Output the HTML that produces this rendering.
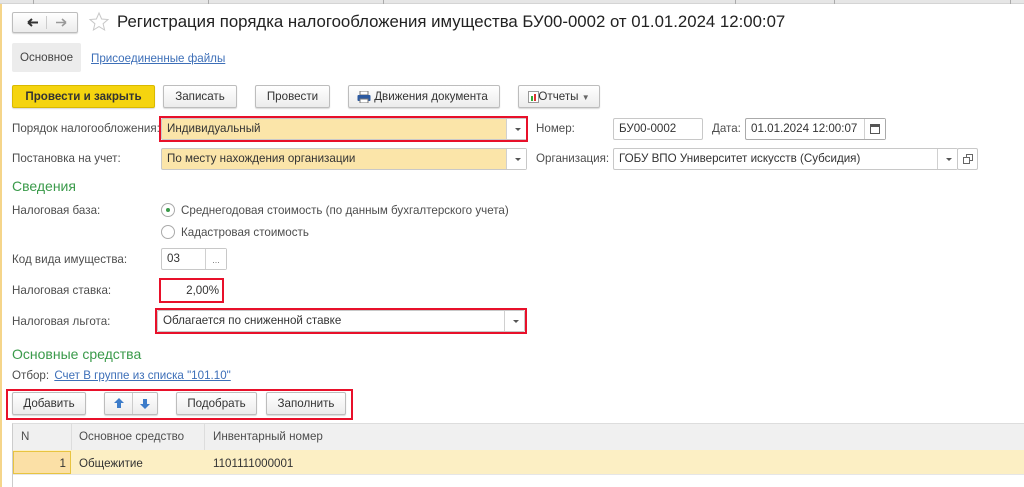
<!DOCTYPE html>
<html><head><meta charset="utf-8"><style>
*{box-sizing:border-box;margin:0;padding:0}
body{width:1024px;height:487px;overflow:hidden;background:#fff;font-family:"Liberation Sans","Noto Sans CJK SC",sans-serif;font-size:11.6px;color:#4d4d4d;position:relative}
.a{position:absolute;white-space:nowrap}
.btn{position:absolute;height:23px;border:1px solid #bdbdbd;border-radius:2px;background:linear-gradient(#fff,#ececec);box-shadow:0 1px 1px rgba(0,0,0,.15);text-align:center;line-height:21px;color:#333}
.inp{position:absolute;height:22px;border:1px solid #c8c8c8;border-radius:2px;background:#fff;line-height:20px;padding-left:5px;color:#333}
.y{background:#fbe5a9}
.dd{position:absolute;right:0;top:0;width:20px;height:100%;border-left:1px solid #d0d0d0;background:#fff}
.arr:after{content:"";position:absolute;left:8px;top:9px;border:3px solid transparent;border-top:3px solid #555}
.red{position:absolute;border:2px solid #e8102a}
.lbl{position:absolute;white-space:nowrap;color:#4d4d4d}
.grn{position:absolute;color:#3a9a4a;font-size:14px}
.lnk{color:#3d6fb8;text-decoration:underline}
</style></head><body>
<div class="a" style="left:0;top:0;width:1024px;height:4px;background:#e6e6e6;border-bottom:1px solid #d4d4d4"></div>
<div class="a" style="left:33px;top:0;width:1px;height:4px;background:#aaa"></div>
<div class="a" style="left:208px;top:0;width:1px;height:4px;background:#aaa"></div>
<div class="a" style="left:383px;top:0;width:1px;height:4px;background:#aaa"></div>
<div class="a" style="left:735px;top:0;width:1px;height:4px;background:#aaa"></div>
<div class="a" style="left:834px;top:0;width:1px;height:4px;background:#aaa"></div>
<div class="a" style="left:1010px;top:0;width:1px;height:4px;background:#aaa"></div>
<div class="a" style="left:0;top:4px;width:2px;height:483px;background:#f5d58a"></div>

<div class="btn" style="left:12px;top:12px;width:66px;height:21px">
<svg width="64" height="19" style="position:absolute;left:0;top:0"><path d="M15 9.5h10M15 9.5l4-3.5M15 9.5l4 3.5" stroke="#333" stroke-width="2" fill="none"/><line x1="33.5" y1="3" x2="33.5" y2="16" stroke="#ccc"/><path d="M53 9.5h-10M53 9.5l-4-3.5M53 9.5l-4 3.5" stroke="#999" stroke-width="1.6" fill="none"/></svg></div>
<svg class="a" style="left:88px;top:11px" width="22" height="22"><path d="M11 2l2.6 6 6.4.5-4.9 4.2 1.5 6.3L11 15.6 5.4 19l1.5-6.3L2 8.5 8.4 8z" fill="none" stroke="#c8c8c8" stroke-width="1"/></svg>
<div class="a" style="left:117px;top:12px;font-size:16.8px;color:#222">Регистрация порядка налогообложения имущества БУ00-0002 от 01.01.2024 12:00:07</div>

<div class="a" style="left:12px;top:43px;width:69px;height:29px;background:#ececec;border-radius:2px;line-height:29px;text-align:center;color:#444">Основное</div>
<div class="a lnk" style="left:91px;top:52px">Присоединенные файлы</div>

<div class="btn" style="left:12px;top:85px;width:143px;background:#f5d40f;border-color:#d9b900;font-weight:bold;color:#333">Провести и закрыть</div>
<div class="btn" style="left:163px;top:85px;width:74px">Записать</div>
<div class="btn" style="left:255px;top:85px;width:75px">Провести</div>
<div class="btn" style="left:348px;top:85px;width:152px;padding-left:14px"><svg style="position:absolute;left:8px;top:5px" width="14" height="12"><rect x="3" y="0" width="8" height="4" fill="#fff" stroke="#777"/><rect x="0.5" y="4" width="13" height="6" rx="1" fill="#2c5aa0"/><rect x="3" y="8" width="8" height="4" fill="#fff" stroke="#777"/></svg>Движения документа</div>
<div class="btn" style="left:518px;top:85px;width:82px;padding-left:10px"><svg style="position:absolute;left:9px;top:5px" width="11" height="12"><rect x="0.5" y="0.5" width="10" height="11" fill="#fff" stroke="#999"/><rect x="3" y="5" width="2" height="5" fill="#3a3"/><rect x="6" y="3" width="2" height="7" fill="#d33"/></svg>Отчеты <span style="font-size:8px;color:#666">▼</span></div>

<div class="lbl" style="left:12px;top:122px">Порядок налогообложения:</div>
<div class="inp y" style="left:161px;top:118px;width:366px">Индивидуальный<div class="dd arr"></div></div>
<div class="red" style="left:159px;top:116px;width:369px;height:26px"></div>
<div class="lbl" style="left:536px;top:122px">Номер:</div>
<div class="inp" style="left:613px;top:118px;width:90px">БУ00-0002</div>
<div class="lbl" style="left:712px;top:122px">Дата:</div>
<div class="inp" style="left:745px;top:118px;width:141px;border-color:#aaa">01.01.2024 12:00:07<div class="dd" style="width:21px"><svg style="position:absolute;left:5px;top:5px" width="10" height="10"><rect x="0.5" y="0.5" width="9" height="9" fill="#fff" stroke="#555"/><rect x="0" y="0" width="10" height="3" fill="#555"/></svg></div></div>

<div class="lbl" style="left:12px;top:152px">Постановка на учет:</div>
<div class="inp y" style="left:161px;top:148px;width:366px">По месту нахождения организации<div class="dd arr"></div></div>
<div class="lbl" style="left:536px;top:152px">Организация:</div>
<div class="inp" style="left:613px;top:148px;width:345px">ГОБУ ВПО Университет искусств (Субсидия)<div class="dd arr"></div></div>
<div class="inp" style="left:957px;top:148px;width:21px;padding:0"><svg style="position:absolute;left:5px;top:5px" width="10" height="10"><rect x="3.5" y="0.5" width="6" height="6" fill="none" stroke="#666"/><rect x="0.5" y="3.5" width="6" height="6" fill="#fff" stroke="#666"/></svg></div>

<div class="grn" style="left:12px;top:178px">Сведения</div>
<div class="lbl" style="left:12px;top:204px">Налоговая база:</div>
<div class="a" style="left:161px;top:203px;width:14px;height:14px;border:1px solid #aaa;border-radius:50%;background:#fff"><span style="position:absolute;left:4px;top:4px;width:4px;height:4px;border-radius:50%;background:#3a9a4a"></span></div>
<div class="lbl" style="left:181px;top:204px">Среднегодовая стоимость (по данным бухгалтерского учета)</div>
<div class="a" style="left:161px;top:225px;width:14px;height:14px;border:1px solid #aaa;border-radius:50%;background:#fff"></div>
<div class="lbl" style="left:181px;top:226px">Кадастровая стоимость</div>

<div class="lbl" style="left:12px;top:253px">Код вида имущества:</div>
<div class="inp" style="left:161px;top:248px;width:66px">03<div class="dd" style="width:21px;font-size:9px;text-align:center;line-height:22px;color:#777">...</div></div>

<div class="lbl" style="left:12px;top:284px">Налоговая ставка:</div>
<div class="inp" style="left:160px;top:279px;width:64px;text-align:right;padding-right:5px;border:none;line-height:24px">2,00%</div>
<div class="red" style="left:159px;top:278px;width:65px;height:25px"></div>
<div class="lbl" style="left:12px;top:315px">Налоговая льгота:</div>
<div class="inp" style="left:157px;top:310px;width:368px">Облагается по сниженной ставке<div class="dd arr"></div></div>
<div class="red" style="left:155px;top:308px;width:372px;height:26px"></div>

<div class="grn" style="left:12px;top:346px">Основные средства</div>
<div class="lbl" style="left:12px;top:369px">Отбор: <span class="lnk" style="margin-left:2px">Счет В группе из списка "101.10"</span></div>

<div class="red" style="left:6px;top:389px;width:347px;height:31px"></div>
<div class="btn" style="left:12px;top:392px;width:74px">Добавить</div>
<div class="btn" style="left:104px;top:392px;width:54px"><svg style="position:absolute;left:0;top:0" width="52" height="21"><path d="M14 5l-5 5h3v5h4v-5h3z" fill="#3d7cc9"/><line x1="27.5" y1="0" x2="27.5" y2="21" stroke="#ccc"/><path d="M40 16l-5-5h3V6h4v5h3z" fill="#3d7cc9"/></svg></div>
<div class="btn" style="left:176px;top:392px;width:81px">Подобрать</div>
<div class="btn" style="left:266px;top:392px;width:80px">Заполнить</div>

<div class="a" style="left:12px;top:423px;width:1012px;height:64px;border-left:1px solid #ccc;border-top:1px solid #ddd"></div>
<div class="a" style="left:13px;top:424px;width:1011px;height:26px;background:#f0f0f0"></div>
<div class="a" style="left:71px;top:424px;width:1px;height:51px;background:#ddd"></div>
<div class="a" style="left:204px;top:424px;width:1px;height:51px;background:#ddd"></div>
<div class="lbl" style="left:21px;top:430px">N</div>
<div class="lbl" style="left:79px;top:430px">Основное средство</div>
<div class="lbl" style="left:213px;top:430px">Инвентарный номер</div>
<div class="a" style="left:13px;top:450px;width:1011px;height:25px;background:#fcefc4;border-bottom:1px solid #e6e6e6"></div>
<div class="a" style="left:13px;top:451px;width:58px;height:23px;background:#fbe0a6;border:1px solid #e8c440;text-align:right;padding-right:4px;line-height:23px;color:#333">1</div>
<div class="lbl" style="left:79px;top:457px;color:#333">Общежитие</div>
<div class="lbl" style="left:213px;top:457px;color:#333">1101111000001</div>
</body></html>
